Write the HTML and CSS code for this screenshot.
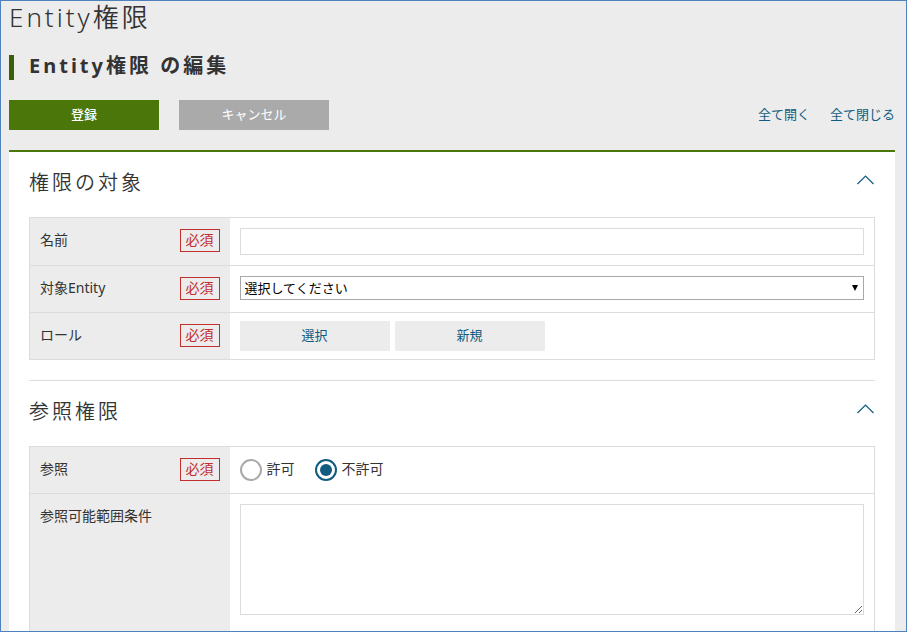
FILE: index.html
```html
<!DOCTYPE html>
<html lang="ja">
<head>
<meta charset="utf-8">
<meta name="viewport" content="width=device-width, initial-scale=1">
<title>Entity権限</title>
<link rel="stylesheet" href="styles.css">
</head>
<body>
<main class="page">
  <h1 class="page-title">Entity権限</h1>
  <h2 class="view-title">Entity権限 の編集</h2>
  <div class="toolbar">
    <button type="button" class="btn btn-primary">登録</button>
    <button type="button" class="btn btn-cancel">キャンセル</button>
    <nav class="toggle-links">
      <a href="#">全て開く</a>
      <a href="#">全て閉じる</a>
    </nav>
  </div>
  <form class="panel">
    <section class="section">
      <header class="section-head">
        <h3>権限の対象</h3>
        <button type="button" class="collapse" aria-label="権限の対象を閉じる"><svg width="18" height="10" viewBox="0 0 18 10"><path d="M.5 9 8.500 1 16.500 9"/></svg></button>
      </header>
      <table class="fields">
        <tr>
          <th scope="row"><div class="field-label"><label for="name">名前</label><span class="required">必須</span></div></th>
          <td><input class="text" type="text" id="name"></td>
        </tr>
        <tr>
          <th scope="row"><div class="field-label"><label for="entity">対象Entity</label><span class="required">必須</span></div></th>
          <td><div class="select"><select id="entity"><option>選択してください</option></select><svg class="arrow" width="6" height="6" viewBox="0 0 6 6"><path d="M0 0H6L3 6Z"/></svg></div></td>
        </tr>
        <tr>
          <th scope="row"><div class="field-label"><span>ロール</span><span class="required">必須</span></div></th>
          <td class="actions"><div class="button-row"><button type="button" class="btn btn-sub">選択</button><button type="button" class="btn btn-sub">新規</button></div></td>
        </tr>
      </table>
    </section>
    <section class="section">
      <header class="section-head">
        <h3>参照権限</h3>
        <button type="button" class="collapse" aria-label="参照権限を閉じる"><svg width="18" height="10" viewBox="0 0 18 10"><path d="M.5 9 8.500 1 16.500 9"/></svg></button>
      </header>
      <table class="fields">
        <tr>
          <th scope="row"><div class="field-label"><span>参照</span><span class="required">必須</span></div></th>
          <td><div class="radios"><label><input type="radio" name="refer">許可</label><label><input type="radio" name="refer" checked>不許可</label></div></td>
        </tr>
        <tr>
          <th scope="row"><div class="field-label"><label for="condition">参照可能範囲条件</label></div></th>
          <td class="memo"><textarea id="condition"></textarea></td>
        </tr>
      </table>
    </section>
  </form>
</main>
</body>
</html>
```
FILE: styles.css
```css
* {
  box-sizing: border-box;
}

body {
  margin: 0;
  color: #333;
  font: 400 14px/22px "Noto Sans", "Noto Sans CJK JP", sans-serif;
}

button,
input,
select,
textarea {
  font: inherit;
}

.page {
  height: 100vh;
  overflow: hidden;
  padding: 0 11px 0 8px;
  border: 1px solid #4f81bd;
  background: #ececec;
}

h1,
h2,
h3 {
  margin: 0;
  letter-spacing: 3px;
}

.page-title {
  font-size: 26px;
  line-height: 32px;
  font-weight: 350;
}

.view-title {
  margin: 22px 0 20px;
  padding: 0 0 3px 15px;
  border-left: 5px solid #3b5f08;
  font-size: 20px;
  line-height: 22px;
  font-weight: 700;
}

.toolbar {
  display: flex;
  align-items: center;
  gap: 20px;
}

.btn {
  width: 150px;
  height: 30px;
  padding: 0 0 2px;
  border: 0;
  font-size: 13px;
}

.btn-primary {
  background: #4b7609;
  color: #fff;
  font-weight: 500;
}

.btn-cancel {
  background: #aaa;
  color: #fff;
}

.btn-sub {
  background: #ececec;
  color: #115b80;
}

.toggle-links {
  display: flex;
  gap: 20px;
  margin-left: auto;
  padding-bottom: 2px;
  font-size: 13px;
}

.toggle-links a {
  color: #115b80;
  text-decoration: none;
}

.panel {
  margin-top: 20px;
  padding: 0 20px 20px;
  border-top: 2px solid #4b7609;
  background: #fff;
}

.section + .section {
  margin-top: 20px;
  border-top: 1px solid #dcdcdc;
}

.section-head {
  display: flex;
  align-items: center;
  justify-content: space-between;
  height: 65px;
  padding-bottom: 3px;
}

h3 {
  font-size: 20px;
  font-weight: 350;
}

.collapse {
  display: flex;
  padding: 0 0 6px;
  border: 0;
  background: none;
}

.collapse svg {
  fill: none;
  stroke: #115b80;
  stroke-width: 1.2;
}

.fields {
  width: 100%;
  border: 1px solid #dcdcdc;
  border-collapse: collapse;
}

.fields tr {
  height: 47px;
  border-bottom: 1px solid #dcdcdc;
}

.fields th {
  width: 200px;
  padding: 11px 10px 0;
  background: #ececec;
  font-weight: inherit;
  text-align: left;
  vertical-align: top;
}

.fields td {
  padding: 10px;
  vertical-align: top;
}

.fields .actions {
  padding: 8px 10px;
}

.fields .memo {
  padding-bottom: 30px;
}

.field-label {
  display: flex;
  justify-content: space-between;
}

.required {
  height: 23px;
  padding: 0 5px;
  border: 1px solid #c22d2d;
  color: #c22d2d;
  line-height: 20px;
}

.text,
textarea {
  display: block;
  width: 100%;
  border: 1px solid #dcdcdc;
}

.text {
  height: 27px;
}

textarea {
  height: 111px;
}

.select {
  position: relative;
}

.select select {
  appearance: none;
  display: block;
  width: 100%;
  height: 24px;
  padding: 0 4px 2px;
  border: 1px solid #a9a9a9;
  border-radius: 0;
  background: #fff;
  color: #000;
  font-size: 13px;
}

.arrow {
  position: absolute;
  top: 9px;
  right: 6px;
  pointer-events: none;
}

.button-row {
  display: flex;
  gap: 5px;
}

.radios {
  display: flex;
  gap: 20px;
  padding-top: 2px;
}

.radios label {
  display: flex;
  gap: 5px;
  line-height: 20px;
}

.radios input {
  appearance: none;
  width: 22px;
  height: 22px;
  margin: 0;
  border: 2px solid #aaa;
  border-radius: 50%;
  background: #fff;
}

.radios input:checked {
  padding: 3px;
  border-color: #115b80;
  background: #115b80 content-box;
}
```
